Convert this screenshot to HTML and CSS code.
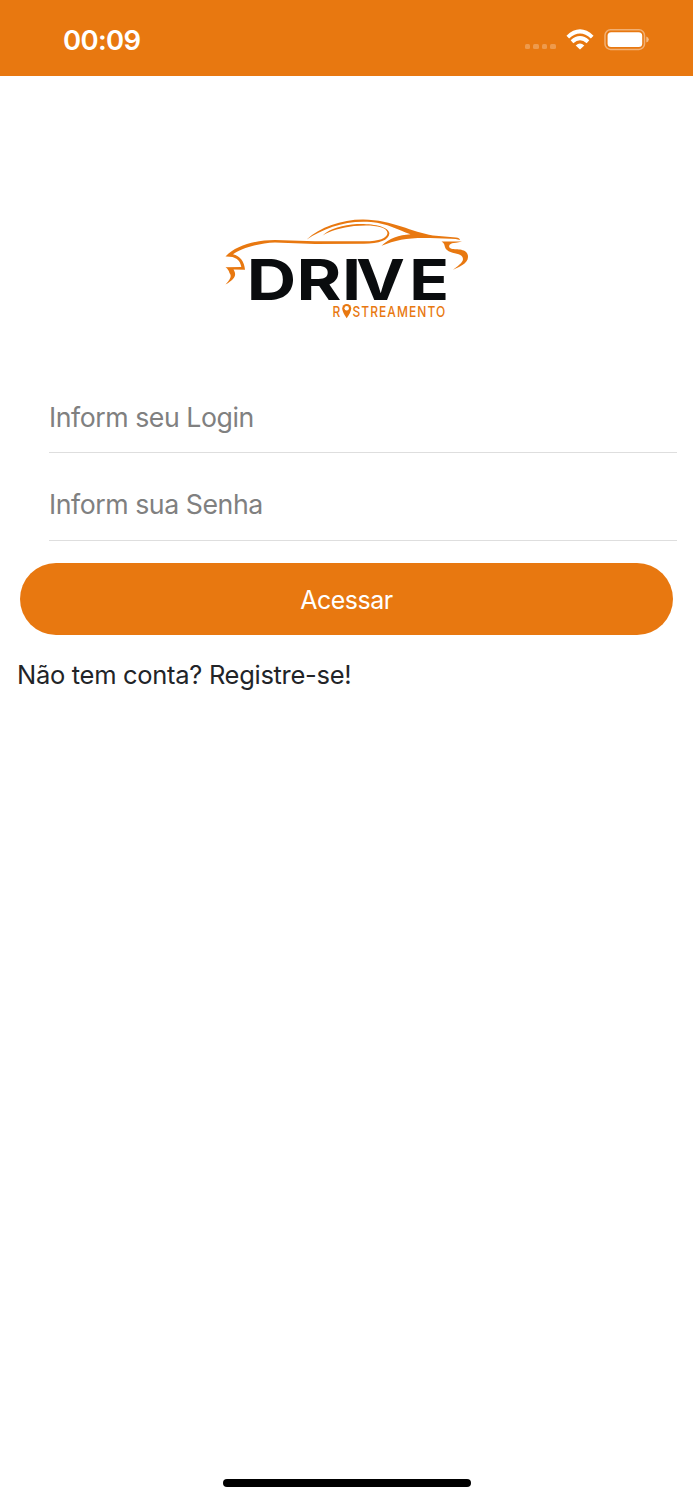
FILE: index.html
```html
<!DOCTYPE html>
<html lang="pt-BR">
<head>
  <meta charset="UTF-8">
  <title>Drive Rastreamento</title>
  <meta name="viewport" content="width=device-width, initial-scale=1.0">
  <link rel="stylesheet" href="styles.css">
</head>
<body>
  <header class="status-bar">
    <span class="time">00:09</span>
    <div class="status-icons">
      <div class="signal"><i></i><i></i><i></i><i></i></div>
      <svg class="wifi" width="28" height="22" viewBox="0 0 28 22" fill="none" stroke="#fff" stroke-width="3.9">
        <path d="M1.8 8.1Q14-3.3 26.2 8.1"/>
        <path d="M6 12.7Q14 5.5 22 12.7"/>
        <path d="M9.7 16.5Q14 12.5 18.3 16.5L14 20.6Z" fill="#fff" stroke="none"/>
      </svg>
      <svg class="battery" width="46" height="22" viewBox="0 0 46 22">
        <rect x="1" y=".8" width="39.5" height="19.6" rx="5.5" fill="none" stroke="#fff" stroke-opacity=".42" stroke-width="1.5"/>
        <rect x="3.6" y="3.2" width="34.6" height="14.8" rx="3.5" fill="#fff"/>
        <path d="M42.3 7.4Q44.8 8.2 44.8 10.5T42.3 13.6Z" fill="#fff" fill-opacity=".5"/>
      </svg>
    </div>
  </header>

  <main class="login">
    <svg class="logo" width="260" height="120" viewBox="0 0 260 120">
      <g fill="#e87810">
        <!-- hood and lower body line -->
        <path d="M10.5 46.5C20 36 40 30 60 30L100 31.2L150 31.3C164 31.2 172 28.5 172.5 23C172 15.5 154 14.4 139 16.1C127 17.6 115 21 107.6 25.4C115 18.5 128 14.9 142 14C158 13.4 174 16.5 174.4 23.3C174 30.5 164 33.4 149 33.8L100 34L60 32.5C43 33 25 39 18 44.2C25 45.5 29.5 52 30 59.8L18.5 59.5C22 65 20 69 10.5 74.5C15.5 69.5 17 66 14.5 63C13.8 60.5 13 59 10.5 57.2L26.3 57C25 49.5 20.5 46.3 10.5 46.5Z"/>
        <!-- roof -->
        <path d="M91.7 29.5C105 17.5 126 9.6 148 9.6C178 10 197 22.5 218 25.4L241 27.6Q244.5 28 245 30.1Q241 28.8 236 28.8L215 28C194 27.5 181 29.5 166.5 35.8C174 28.3 184 25.2 195.5 24.3C182 19.5 173 13.5 156 12C131 10 109 18 91.7 29.5Z"/>
        <!-- rear light -->
        <path d="M226.5 31.4L247 31.4Q240 32.8 237 33.3C233.5 34.7 233 37.5 236.5 38.8C242 40 253 38 253 47C253 54 243 57 238 60C242 56.2 248 53 248 49C247.5 42.2 237 44.5 232 40C228.5 37 231 34 226.5 31.4Z"/>
      </g>
      <text class="logo-name" transform="translate(0 90) scale(1.2 1)" x="26.4 68 105.9">DRI</text>
      <text class="logo-name" transform="translate(0 90) scale(1.15 1)" x="122.6 169">VE</text>
      <text class="logo-sub" transform="translate(0 107) scale(.8 1)" x="147">R</text>
      <path d="M131.7 108.3Q127.2 101.6 127.2 98.4A4.5 4.5 0 0 1 136.2 98.4Q136.2 101.6 131.7 108.3Z" fill="#e87810"/>
      <circle cx="131.7" cy="98.2" r="2.2" fill="#fff"/>
      <text class="logo-sub" transform="translate(0 107) scale(.8 1)" x="171.8" textLength="116" lengthAdjust="spacing">STREAMENTO</text>
    </svg>

    <form class="login-form">
      <input class="field" type="text" placeholder="Inform seu Login">
      <input class="field" type="password" placeholder="Inform sua Senha">
      <button class="btn" type="button">Acessar</button>
    </form>
    <p class="register">Não tem conta? Registre-se!</p>
  </main>

  <div class="home-indicator"></div>
</body>
</html>
```
FILE: styles.css
```css
* { box-sizing: border-box; }
body {
  margin: 0;
  height: 1500px;
  display: flex;
  flex-direction: column;
  font-family: Inter, sans-serif;
  background: #fff;
  color: #222428;
  overflow: hidden;
}
.status-bar {
  height: 76px;
  padding: 3px 43px 0 63px;
  display: flex;
  justify-content: space-between;
  align-items: center;
  background: #e87810;
  color: #fff;
}
.time {
  font-size: 27.5px;
  font-weight: 600;
  letter-spacing: -0.7px;
}
.status-icons {
  display: flex;
  align-items: center;
  padding-top: 1px;
}
.signal {
  display: flex;
  gap: 3px;
  margin: 13px 10px 0 0;
}
.signal i {
  width: 5.6px;
  height: 5.6px;
  border-radius: 1.5px;
  background: rgba(255,255,255,0.25);
}
.battery { margin-left: 10px; }
.login { flex: 1; }
.logo {
  display: block;
  margin: 134px 0 0 215px;
}
.logo-name {
  font-size: 57px;
  font-weight: 700;
  fill: #0a0c0e;
}
.logo-sub {
  font-size: 15px;
  font-weight: 500;
  fill: #e87810;
}
.login-form {
  display: flex;
  flex-direction: column;
  padding: 35px 16px 0 49px;
}
.field {
  height: 88px;
  padding: 17px 0 0;
  border: 0;
  border-bottom: 1px solid #dedede;
  border-radius: 0;
  background: none;
  font: 400 26.7px Inter, sans-serif;
  letter-spacing: -0.45px;
  outline: 0;
}
.field + .field { padding-top: 15px; }
.field::placeholder {
  color: #808080;
  opacity: 1;
}
.btn {
  height: 72px;
  margin: 22px 4px 0 -29px;
  padding-top: 3px;
  border: 0;
  border-radius: 36px;
  background: #e87810;
  color: #fff;
  font: 400 25px Inter, sans-serif;
  letter-spacing: -0.5px;
}
.register {
  margin: 24px 17px;
  font-size: 25.5px;
  line-height: 32px;
  letter-spacing: -0.3px;
}
.home-indicator {
  width: 248px;
  height: 8px;
  margin: 0 auto 13px;
  border-radius: 4px;
  background: #000;
}
```
